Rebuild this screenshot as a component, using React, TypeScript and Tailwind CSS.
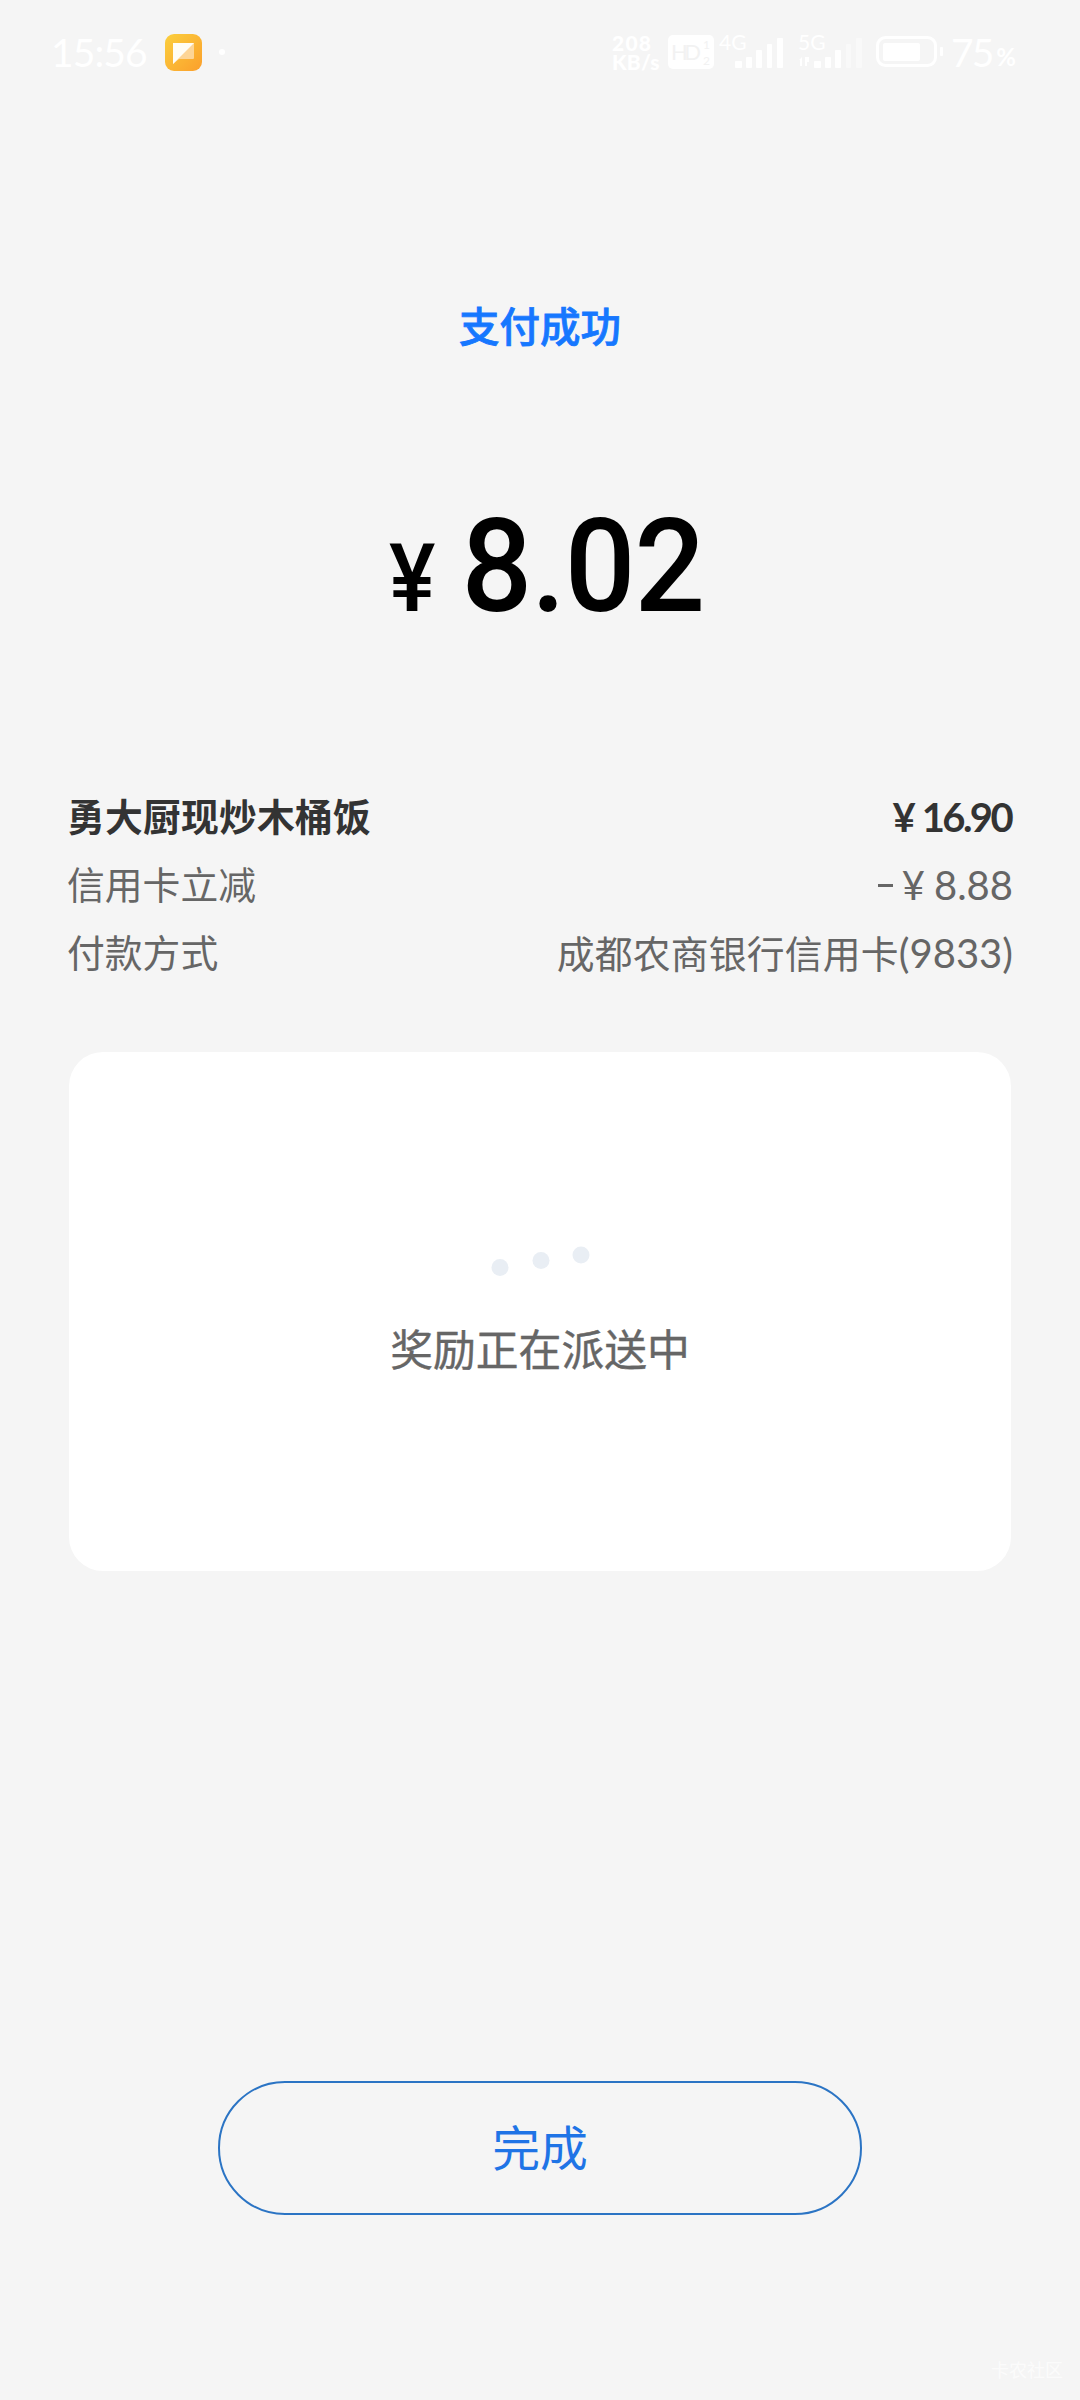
import type { ReactNode } from "react";

const cjk = "font-['Lato','Noto_Sans_CJK_SC',sans-serif]";

const rows = [
    { label: "信用卡立减", value: <Money sign="－" amount="8.88" /> },
    {
        label: "付款方式",
        value: (
            <>
                <span className="tracking-[0.2px]">成都农商银行信用卡</span>
                <span className="text-[40px]">(9833)</span>
            </>
        )
    }
];

function Money({ sign, amount, bold }: { sign?: string; amount: string; bold?: boolean }) {
    return (
        <span className="flex items-center text-[40px]">
            {sign && <span className="mr-[9px] h-[3px] w-[15px] bg-[#666]" aria-label={sign} />}
            <span className={bold ? "mr-[6px]" : "mr-[9px]"}>¥</span>
            <span className={bold ? "mr-[2px] tracking-[-2.6px]" : ""}>{amount}</span>
        </span>
    );
}

function Row({ label, value, bold }: { label: string; value: ReactNode; bold?: boolean }) {
    return (
        <div className={`flex h-[68px] items-center justify-between text-[37.8px] leading-none ${bold ? "font-bold text-[#333]" : "text-[#666]"}`}>
            <span className={bold ? "tracking-[0.2px]" : ""}>{label}</span>
            <span>{value}</span>
        </div>
    );
}

function AppIcon() {
    return (
        <svg width="37" height="37" viewBox="0 0 37 37">
            <defs>
                <linearGradient id="app" x1="0" y1="0" x2="1" y2="1">
                    <stop offset="0" stopColor="#fbcf3d" />
                    <stop offset="1" stopColor="#fb9f2c" />
                </linearGradient>
            </defs>
            <rect width="37" height="37" rx="9" fill="url(#app)" />
            <path d="M8 9h21v15a1 1 0 0 1-1 1H14l-6 5z" fill="#fdd596" />
            <path d="M8 9h21L13 25l-5 5z" fill="#fffdf5" />
        </svg>
    );
}

function Signal({ label, weak }: { label: string; weak?: boolean }) {
    return (
        <svg className="-mt-[6px]" width="66" height="42" viewBox="0 -6 66 42" fill="#fff">
            <text x="0" y="16" fontSize="21" fontFamily="Lato">{label}</text>
            {weak && <path d="M1 26l3-3v9H2v-6zM7 23h4v5H9v4H7z" />}
            <rect x="16" y="27" width="7" height="7" rx="1" />
            <rect x="27" y="23" width="6" height="11" rx="1" />
            <rect x="37" y="16" width="6" height="18" rx="1" />
            <rect x="48" y="10" width="5" height="24" rx="1" opacity={weak ? 0.4 : 1} />
            <rect x="58" y="4" width="6" height="30" rx="1" opacity={weak ? 0.4 : 1} />
        </svg>
    );
}

function StatusBar() {
    return (
        <div className="flex h-[104px] items-center pl-[51px] pr-[64px] text-white">
            <span className="w-[96px] whitespace-nowrap text-[39px] leading-none tracking-[-0.9px]">15:56</span>
            <div className="ml-[18px]">
                <AppIcon />
            </div>
            <span className="ml-[17px] h-[6px] w-[6px] rounded-full bg-white" />

            <div className="ml-auto flex items-center">
                <div className="w-[54px] text-[21px] font-black leading-[19px]">
                    <div className="tracking-[1.2px]">208</div>
                    <div className="tracking-[0.2px]">KB/s</div>
                </div>
                <svg className="ml-[2px]" width="46" height="34" viewBox="0 0 46 34">
                    <rect width="46" height="34" rx="5" fill="#fff" />
                    <g fill="#f2f2f2" fontFamily="Lato">
                        <text x="3" y="25" fontSize="22" textLength="30">HD</text>
                        <text x="35" y="14" fontSize="12">1</text>
                        <text x="35" y="30" fontSize="12">2</text>
                    </g>
                </svg>
                <div className="ml-[5px]">
                    <Signal label="4G" />
                </div>
                <div className="ml-[13px]">
                    <Signal label="5G" weak />
                </div>
                <svg className="ml-[12px]" width="68" height="32" viewBox="0 0 68 32" fill="#fff">
                    <rect x="1.5" y="1.5" width="58" height="28" rx="8" fill="none" stroke="#fff" strokeWidth="3" />
                    <rect x="7" y="7" width="37" height="18" rx="2" />
                    <rect x="64" y="11" width="3" height="9" rx="1" />
                </svg>
                <span className="ml-[7px] text-[39px] leading-none tracking-[-2px]">75</span>
                <span className="ml-[4px] pt-[9px] text-[24px] font-bold leading-none">%</span>
            </div>
        </div>
    );
}

export default function App() {
    return (
        <main className={`relative flex h-[2400px] w-[1080px] flex-col bg-[#f5f5f5] ${cjk}`}>
            <StatusBar />

            {/* Amount */}
            <h1 className="mt-[193px] text-center text-[40.5px] font-medium leading-[60px] text-[#1677ff] [-webkit-text-stroke:0.8px]">
                支付成功
            </h1>
            <div className="mt-[137px] flex h-[146px] items-baseline justify-center pl-[14px] font-['Roboto',sans-serif] font-medium leading-[146px] text-black">
                <span className="mr-[21px] origin-right scale-x-[0.92] text-[95px] leading-[150px]">¥</span>
                <span className="scale-x-[0.965] text-[129px] tracking-[-1px]">8.02</span>
            </div>

            {/* Bill details */}
            <section className="mt-[143px] px-[67px]">
                <Row label="勇大厨现炒木桶饭" value={<Money amount="16.90" bold />} bold />
                {rows.map((row) => (
                    <Row key={row.label} {...row} />
                ))}
            </section>

            {/* Reward */}
            <section className="mx-[69px] mt-[65px] flex h-[519px] flex-col items-center rounded-[34px] bg-white">
                <svg className="mt-[190px]" width="110" height="40" viewBox="0 0 110 40" fill="#e9eef4">
                    <circle cx="15" cy="25.5" r="8.5" />
                    <circle cx="56" cy="18.5" r="8.5" />
                    <circle cx="96" cy="13" r="8.5" />
                </svg>
                <p className="mt-[38px] text-[42.8px] leading-[60px] text-[#666] [-webkit-text-stroke:0.4px]">奖励正在派送中</p>
            </section>

            <button className="mx-auto mt-[510px] h-[134px] w-[644px] rounded-full border-2 border-[#2b74c4] text-[47.8px] leading-none text-[#1f74e6]">
                完成
            </button>

            <span className="absolute bottom-[21px] right-[17px] text-[18px] leading-none text-white/70">卡农社区</span>
        </main>
    );
}
